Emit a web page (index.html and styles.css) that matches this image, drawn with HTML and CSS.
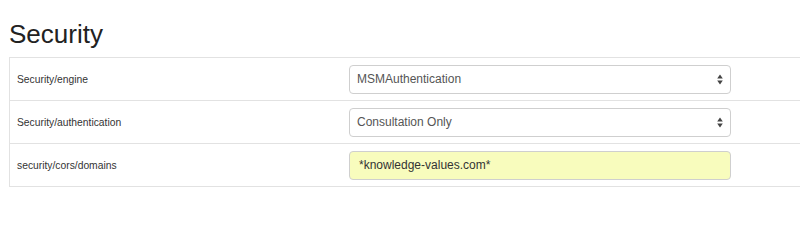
FILE: index.html
```html
<!DOCTYPE html>
<html>
<head>
<meta charset="utf-8">
<link rel="stylesheet" href="styles.css">
</head>
<body>
<div class="page">
  <h2 class="title">Security</h2>
  <div class="settings">
    <div class="row">
      <div class="label">Security/engine</div>
      <div class="control">
        <div class="select">
          <span>MSMAuthentication</span>
          <svg class="caret" width="6" height="11" viewBox="0 0 6 11"><path d="M3 0.5 L5.8 4.5 L0.2 4.5 Z M3 10.5 L5.8 6.5 L0.2 6.5 Z" fill="#444"/></svg>
        </div>
      </div>
    </div>
    <div class="row">
      <div class="label">Security/authentication</div>
      <div class="control">
        <div class="select">
          <span>Consultation Only</span>
          <svg class="caret" width="6" height="11" viewBox="0 0 6 11"><path d="M3 0.5 L5.8 4.5 L0.2 4.5 Z M3 10.5 L5.8 6.5 L0.2 6.5 Z" fill="#444"/></svg>
        </div>
      </div>
    </div>
    <div class="row">
      <div class="label">security/cors/domains</div>
      <div class="control">
        <div class="input">*knowledge-values.com*</div>
      </div>
    </div>
  </div>
</div>
</body>
</html>
```
FILE: styles.css
```css
html, body {
  margin: 0;
  padding: 0;
  background: #fff;
  overflow: hidden;
}
body {
  font-family: "Liberation Sans", Arial, Helvetica, sans-serif;
  color: #333;
}
.page {
  padding-left: 9px;
}
.title {
  font-size: 26px;
  font-weight: normal;
  line-height: 28px;
  color: #222;
  margin: 20px 0 9px 0;
}
.settings {
  border-top: 1px solid #e2e2e2;
  border-left: 1px solid #e2e2e2;
}
.row {
  display: flex;
  align-items: center;
  border-bottom: 1px solid #e2e2e2;
  height: 42px;
}
.label {
  box-sizing: border-box;
  width: 332px;
  padding-left: 7px;
  font-size: 10.3px;
  color: #333;
}
.control {
  padding-left: 7px;
  display: flex;
  align-items: center;
}
.select, .input {
  box-sizing: border-box;
  width: 382px;
  height: 29px;
  border: 1px solid #cfcfcf;
  border-radius: 4px;
  font-size: 12px;
  display: flex;
  align-items: center;
}
.select {
  justify-content: space-between;
  padding: 0 7px 0 7px;
  color: #555;
  background: #fff;
}
.caret {
  display: block;
}
.input {
  padding-left: 9px;
  background: #f8fcbd;
  color: #333;
}
```
